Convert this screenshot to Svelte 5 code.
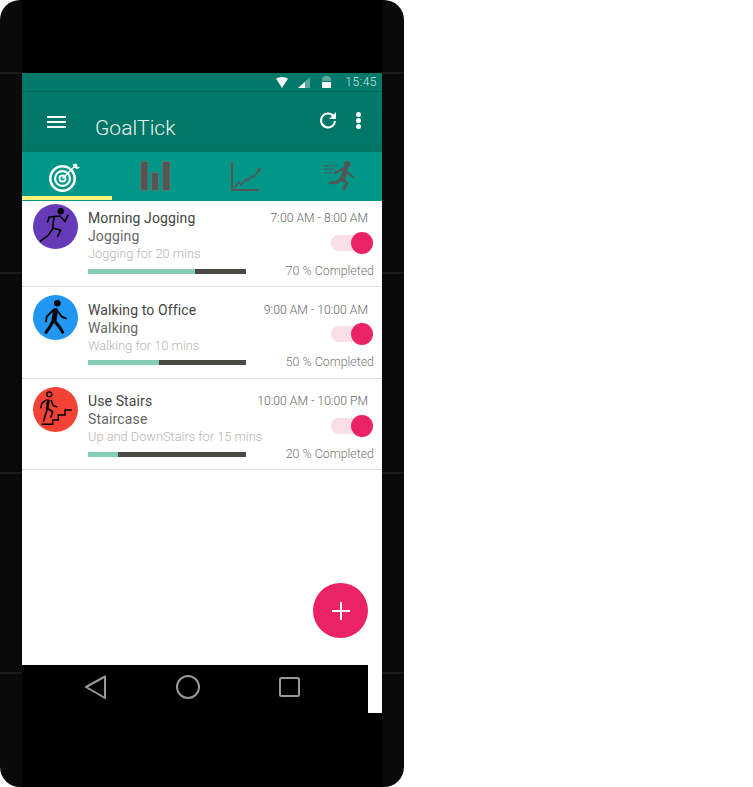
<script lang="ts">
	const goals = [
		{ name: 'Morning Jogging', type: 'Jogging', note: 'Jogging for 20 mins', time: '7:00 AM - 8:00 AM', bar: 68, pct: 70, color: '#673ab7', icon: 'run' },
		{ name: 'Walking to Office', type: 'Walking', note: 'Walking for 10 mins', time: '9:00 AM - 10:00 AM', bar: 45, pct: 50, color: '#2196f3', icon: 'walk' },
		{ name: 'Use Stairs', type: 'Staircase', note: 'Up and DownStairs for 15 mins', time: '10:00 AM - 10:00 PM', bar: 19, pct: 20, color: '#f44336', icon: 'stairs' }
	];
</script>

<div class="phone">
	<div class="center">
		<div class="screen">
			<div class="status">
				<svg width="12" height="11" viewBox="0 0 12 11"><path d="M0 1.500Q6-1.500 12 1.500L6 11z" fill="#fff" /></svg>
				<svg class="signal" width="12" height="11" viewBox="0 0 12 11"><path d="M0 11L12 0v11z" fill="#5aa89c" /><path d="M0 11L7 5v6z" fill="#fff" /></svg>
				<svg class="battery" width="9" height="12" viewBox="0 0 9 12"><path d="M0 2q0-1 2-1V0h5v1q2 0 2 1v3H0z" fill="#5aa89c" /><path d="M0 6h9v6H0z" fill="#fff" /></svg>
				<span class="clock">15:45</span>
			</div>

			<header class="toolbar">
				<div class="burger"><i></i><i></i><i></i></div>
				<h1>GoalTick</h1>
				<svg class="refresh" width="20" height="20" viewBox="0 0 20 20">
					<path d="M15.600 6.200A7 7 0 1 0 17 11" fill="none" stroke="#fff" stroke-width="2" />
					<path d="M18 2v7h-7z" fill="#fff" />
				</svg>
				<div class="dots"><i></i><i></i><i></i></div>
			</header>

			<nav class="tabs">
				<div class="tab active">
					<svg width="32" height="32" viewBox="0 0 32 32" fill="none" stroke="#fff">
						<circle cx="13.500" cy="17.500" r="12.200" stroke-width="2.600" />
						<circle cx="13.500" cy="17.500" r="7.400" stroke-width="2.200" />
						<circle cx="13.500" cy="17.500" r="3" stroke-width="1.800" />
						<path d="M13.500 17.500L25 6" stroke-width="1.400" />
						<path d="M23.500 3.500l1.500 3 3 1.500 3-1.200-2.600-1.200L27.500 2.500z" fill="#fff" stroke="none" />
					</svg>
				</div>
				<div class="tab">
					<svg width="32" height="32" viewBox="0 0 32 32" fill="#555" stroke="#6b7f7a" stroke-width=".6">
						<rect x=".5" y=".5" width="7.500" height="29" />
						<rect x="11.500" y="11.500" width="7" height="18" />
						<rect x="22.500" y=".5" width="7.500" height="29" />
					</svg>
				</div>
				<div class="tab">
					<svg width="32" height="32" viewBox="0 0 32 32" fill="none" stroke="#555">
						<path d="M2 1v28h27" stroke-width="2" />
						<path d="M4 27l5-6 2 3 5-6 2 2 4-5 2 1 5-7" stroke-width="1.500" />
						<path d="M31 6l-1 5-3.500-2.500z" fill="#555" stroke="none" />
					</svg>
				</div>
				<div class="tab runner">
					<svg width="32" height="32" viewBox="0 0 32 32" fill="none" stroke="#555" stroke-linecap="round" stroke-linejoin="round">
						<circle cx="24.300" cy="3.300" r="3.300" fill="#555" stroke="none" />
						<path d="M22 8l-2 10" stroke-width="5" />
						<path d="M12 12l7-4" stroke-width="2.200" />
						<path d="M24 11l6 5" stroke-width="2.200" />
						<path d="M18.700 17l-3.700 4-8 1" stroke-width="2.800" />
						<path d="M20 19l4 3-3 6" stroke-width="2.800" />
						<path d="M1 4.700h13M1 8h10M1 12h8" stroke-width="1" stroke-linecap="butt" />
					</svg>
				</div>
			</nav>

			<div class="list">
				{#each goals as g}
					<section class="row">
						<div class="avatar" style="background: {g.color}">
							{#if g.icon === 'run'}
								<svg width="45" height="45" viewBox="0 0 45 45" fill="none" stroke="#000" stroke-width="1.600">
									<circle cx="27.700" cy="7.300" r="3.200" fill="#000" stroke="none" />
									<path d="M14.300 18.700l2-5.700L27 12l5 5.300 3.300-6.600" />
									<path d="M21 13l-1.300 11 8 2.300-3.400 6.700" />
									<path d="M19.700 24.700l-4.400 6.600L7 37.300" />
								</svg>
							{:else if g.icon === 'walk'}
								<svg width="45" height="45" viewBox="0 0 45 45" fill="none" stroke="#000" stroke-linecap="round">
									<circle cx="24.300" cy="8.300" r="3.300" fill="#000" stroke="none" />
									<path d="M22.500 15.500l-1.500 10" stroke-width="5" />
									<path d="M20.300 15l-6.600 6.700-.7 5" stroke-width="1.800" />
									<path d="M25.300 16.700l3.400 5 4.300 1.600" stroke-width="1.800" />
									<path d="M19.700 26.700l-2.700 5-4 5.600" stroke-width="3" />
									<path d="M22 26.700l4.300 5 3.400 5.600" stroke-width="3" />
								</svg>
							{:else}
								<svg width="45" height="45" viewBox="0 0 45 45" fill="none" stroke="#000">
									<circle cx="16.300" cy="7.300" r="2.500" stroke-width="1.300" />
									<path d="M15.300 12.500l-1 9.500" stroke-width="2.800" />
									<path d="M18 13l2.300 5.700 4 1.300" stroke-width="1.500" />
									<path d="M13 13l-4.300 3.300-.7 4.400" stroke-width="1.500" stroke-linecap="round" />
									<path d="M14.300 22l-4 12.700" stroke-width="1.600" />
									<path d="M15.300 22l4.400 2.700-2 6" stroke-width="1.600" />
									<path d="M8.700 37.300H19.700V33H25.300V28H32V23H38.700" stroke-width="1.500" />
								</svg>
							{/if}
						</div>
						<div class="info">
							<h2>{g.name}</h2>
							<h3>{g.type}</h3>
							<p>{g.note}</p>
							<div class="bar"><div class="fill" style="width: {g.bar}%"></div></div>
						</div>
						<div class="side">
							<span class="time">{g.time}</span>
							<div class="toggle"><i></i></div>
							<span class="done">{g.pct} % Completed</span>
						</div>
					</section>
				{/each}
			</div>

			<button class="fab" aria-label="add">
				<svg width="18" height="18" viewBox="0 0 18 18"><path d="M9 0v18M0 9h18" stroke="#fff" stroke-width="2" /></svg>
			</button>

			<div class="softkeys">
				<svg width="24" height="26" viewBox="0 0 24 26" fill="none" stroke="#999" stroke-width="2" stroke-linejoin="round"><path d="M21 2.500L2 13l19 11z" /></svg>
				<svg width="26" height="26" viewBox="0 0 26 26" fill="none" stroke="#999" stroke-width="2"><circle cx="13" cy="13" r="11" /></svg>
				<svg class="square" width="24" height="24" viewBox="0 0 24 24" fill="none" stroke="#999" stroke-width="2"><rect x="2" y="2" width="19" height="18" rx="1.500" /></svg>
			</div>
		</div>
	</div>
</div>

<style>
	:global(body) {
		background: #fff;
		font-family: Roboto, sans-serif;
	}
	.phone {
		width: 404px;
		height: 787px;
		padding: 0 22px;
		box-sizing: border-box;
		border-radius: 20px;
		overflow: hidden;
		background-color: #0a0a0a;
		background-image: repeating-linear-gradient(to bottom, transparent 0, transparent 72px, #1a1a1a 72px, #1a1a1a 74px, transparent 74px, transparent 200px);
	}
	.center {
		background: #000;
		height: 100%;
		padding-top: 73px;
		box-sizing: border-box;
	}
	.screen {
		position: relative;
		height: 640px;
		background: #fff;
		overflow: hidden;
	}
	.status {
		height: 18px;
		background: #00796b;
		border-bottom: 1px solid #00665a;
		display: flex;
		align-items: center;
		justify-content: flex-end;
		padding-right: 5px;
		color: #cfe6e2;
		font-size: 12px;
	}
	.signal {
		margin-left: 10px;
	}
	.battery {
		margin-left: 12px;
	}
	.clock {
		margin-left: 14px;
		font-weight: 300;
		letter-spacing: .5px;
	}
	.toolbar {
		height: 60px;
		background: linear-gradient(#00796b, #007566);
		position: relative;
		display: flex;
		align-items: flex-start;
	}
	.burger {
		margin: 24px 0 0 25px;
		width: 19px;
		display: flex;
		flex-direction: column;
		gap: 3px;
	}
	.burger i {
		height: 2px;
		background: #fff;
	}
	h1 {
		margin: 21px 0 0 29px;
		font-size: 21px;
		font-weight: 300;
		line-height: 30px;
		color: #e6f3f0;
	}
	.refresh {
		margin: 17.500px 0 0 auto;
	}
	.dots {
		margin: 20px 21px 0 18px;
		display: flex;
		flex-direction: column;
		gap: 1px;
	}
	.dots i {
		width: 5px;
		height: 5px;
		border-radius: 50%;
		background: #fff;
	}
	.tabs {
		height: 49px;
		background: #009688;
		display: grid;
		grid-template-columns: repeat(4, 90px);
	}
	.tab {
		height: 45px;
		box-sizing: border-box;
		display: flex;
		align-items: center;
		justify-content: center;
		padding: 4px 2px 0 0;
	}
	.tab.active {
		height: 48px;
		border-bottom: 4px solid #fdf67c;
		padding: 5px 4px 0 0;
	}
	.tab.runner {
		padding: 4px 0 0 4px;
	}
	.row {
		height: 91.500px;
		box-sizing: border-box;
		padding: 8px 8px 0 11px;
		border-bottom: 1px solid #ddd;
		display: flex;
		gap: 10px;
	}
	.row:first-child {
		height: 86px;
		padding-top: 3px;
	}
	.avatar {
		width: 45px;
		height: 45px;
		border-radius: 50%;
		flex: none;
	}
	.avatar svg {
		display: block;
	}
	.info {
		width: 176px;
		flex: none;
		white-space: nowrap;
	}
	h2,
	h3,
	p {
		margin: 0;
		font-weight: 400;
		font-size: 14px;
		line-height: 18px;
	}
	h2 {
		margin-top: 5.500px;
		color: #444;
		letter-spacing: .12px;
	}
	.row:first-child h2 {
		margin-top: 5px;
	}
	h3 {
		color: #666;
		letter-spacing: .15px;
	}
	p {
		font-size: 12.800px;
		font-weight: 300;
		color: #b5b5b5;
	}
	.bar {
		width: 158px;
		height: 5px;
		margin-top: 5.500px;
		background: #4a4a45;
	}
	.row:first-child .bar {
		margin-top: 6px;
	}
	.fill {
		height: 100%;
		background: #84cdb7;
	}
	.side {
		flex: 1;
		display: flex;
		flex-direction: column;
		align-items: flex-end;
		white-space: nowrap;
		min-width: 0;
	}
	.time {
		margin: 5.500px 6px 0 0;
		font-size: 12.200px;
		font-weight: 300;
		line-height: 18px;
		color: #666;
	}
	.row:first-child .time {
		margin-top: 5px;
	}
	.toggle {
		position: relative;
		width: 34px;
		height: 16px;
		margin: 7.500px 9px 0 0;
		border-radius: 8px;
		background: #fadfe9;
	}
	.row:first-child .toggle {
		margin-top: 8px;
	}
	.toggle i {
		position: absolute;
		right: -8px;
		top: -3px;
		width: 22px;
		height: 22px;
		border-radius: 50%;
		background: #ec2266;
	}
	.done {
		margin-top: 12px;
		font-size: 12.400px;
		font-weight: 300;
		line-height: 16px;
		color: #777;
	}
	.fab {
		position: absolute;
		left: 291px;
		top: 510px;
		width: 55px;
		height: 55px;
		padding: 0;
		border: none;
		border-radius: 50%;
		background: #ec2266;
		display: flex;
		align-items: center;
		justify-content: center;
	}
	.softkeys {
		position: absolute;
		left: 0;
		top: 592px;
		width: 346px;
		height: 48px;
		background: #000;
		display: flex;
		align-items: flex-start;
		padding: 9px 0 0 62px;
		box-sizing: border-box;
		gap: 67px;
	}
	.square {
		margin: 2px 0 0 10px;
	}
</style>
